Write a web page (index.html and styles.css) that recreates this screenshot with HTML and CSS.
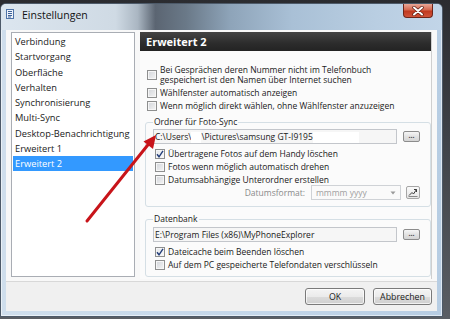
FILE: index.html
```html
<!DOCTYPE html>
<html lang="de">
<head>
    <meta charset="UTF-8">
    <title>Einstellungen</title>
    <link rel="stylesheet" href="styles.css">
</head>
<body>
    <div class="window">
        <div class="titlebar">
            <svg class="app-icon" width="8" height="10" viewBox="0 0 8 10">
                <rect x="0.5" y="0.5" width="7" height="9" fill="#eef3fa" stroke="#4f74a8"/>
                <path d="M2 2.5h4M2 4.5h4M2 6.5h4M2 8h3" stroke="#3d6299" stroke-width="1"/>
            </svg>
            <span class="title">Einstellungen</span>
            <div class="close-btn">
                <svg width="12" height="10" viewBox="0 0 12 10">
                    <path d="M2 1.5L10 8.5M10 1.5L2 8.5" stroke="#5a1a10" stroke-width="3.4" stroke-linecap="round"/>
                    <path d="M2 1.5L10 8.5M10 1.5L2 8.5" stroke="#ffffff" stroke-width="2" stroke-linecap="round"/>
                </svg>
            </div>
        </div>

        <div class="client">
            <div class="main">
                <ul class="nav">
                    <li>Verbindung</li>
                    <li>Startvorgang</li>
                    <li>Oberfläche</li>
                    <li>Verhalten</li>
                    <li>Synchronisierung</li>
                    <li>Multi-Sync</li>
                    <li>Desktop-Benachrichtigung</li>
                    <li>Erweitert 1</li>
                    <li class="selected">Erweitert 2</li>
                </ul>

                <div class="panel">
                    <div class="panel-header">Erweitert 2</div>
                    <div class="panel-body">
                        <div class="checks">
                            <label class="check-row"><span class="box"></span><span>Bei Gesprächen deren Nummer nicht im Telefonbuch<br>gespeichert ist den Namen über Internet suchen</span></label>
                            <label class="check-row"><span class="box"></span><span>Wählfenster automatisch anzeigen</span></label>
                            <label class="check-row"><span class="box"></span><span>Wenn möglich direkt wählen, ohne Wählfenster anzuzeigen</span></label>
                        </div>

                        <fieldset class="group">
                            <legend>Ordner für Foto-Sync</legend>
                            <div class="path-row">
                                <div class="path-field">C:\Users\<span class="blot small"></span>\Pictures\samsung GT-I9195<span class="blot wide"></span></div>
                                <div class="dots-btn">...</div>
                            </div>
                            <div class="checks inner">
                                <label class="check-row"><span class="box checked"><svg width="8" height="8" viewBox="0 0 8 8"><path d="M1 4.2L3 6.8L7 0.8" fill="none" stroke="#233d78" stroke-width="1.4"/></svg></span><span>Übertragene Fotos auf dem Handy löschen</span></label>
                                <label class="check-row"><span class="box"></span><span>Fotos wenn möglich automatisch drehen</span></label>
                                <label class="check-row"><span class="box"></span><span>Datumsabhängige Unterordner erstellen</span></label>
                            </div>
                            <div class="date-row">
                                <span class="date-label">Datumsformat:</span>
                                <div class="combo">
                                    <span>mmmm yyyy</span>
                                    <svg width="6" height="4" viewBox="0 0 6 4"><path d="M0.5 0.5L3 3.5L5.5 0.5z" fill="#9a9a9a"/></svg>
                                </div>
                                <div class="tool-btn">
                                    <svg width="10" height="9" viewBox="0 0 10 9">
                                        <path d="M1 7.5L4 4.5L5.5 6L8.5 1.5" fill="none" stroke="#3a3a3a" stroke-width="1"/>
                                        <path d="M6 1.5H8.5V4" fill="none" stroke="#3a3a3a" stroke-width="1"/>
                                        <path d="M0.5 8.5H9.5" stroke="#888" stroke-width="1"/>
                                    </svg>
                                </div>
                            </div>
                        </fieldset>

                        <fieldset class="group second">
                            <legend>Datenbank</legend>
                            <div class="path-row">
                                <div class="path-field">E:\Program Files (x86)\MyPhoneExplorer</div>
                                <div class="dots-btn">...</div>
                            </div>
                            <div class="checks inner">
                                <label class="check-row"><span class="box checked"><svg width="8" height="8" viewBox="0 0 8 8"><path d="M1 4.2L3 6.8L7 0.8" fill="none" stroke="#233d78" stroke-width="1.4"/></svg></span><span>Dateicache beim Beenden löschen</span></label>
                                <label class="check-row"><span class="box"></span><span>Auf dem PC gespeicherte Telefondaten verschlüsseln</span></label>
                            </div>
                        </fieldset>
                    </div>
                </div>
            </div>

            <div class="footer">
                <button class="btn">OK</button>
                <button class="btn">Abbrechen</button>
            </div>
        </div>
    </div>

    <!-- rote Markierung aus dem Screenshot -->
    <svg class="annotation" width="450" height="319" viewBox="0 0 450 319">
        <path d="M87 221L151 141" stroke="#c8141a" stroke-width="3" stroke-linecap="round"/>
        <path d="M156 135L143.5 141.5L153 149z" fill="#c8141a"/>
    </svg>
</body>
</html>
```

FILE: styles.css
```css
* {
    box-sizing: border-box;
}

body {
    margin: 0;
    padding-top: 3px;
    width: 450px;
    height: 319px;
    overflow: hidden;
    position: relative;
    background: linear-gradient(#2b2c30, #3d4046 40%, #5a5e64);
    font-family: "Open Sans", "Noto Sans", sans-serif;
    color: #1a1a1a;
}

.window {
    width: 443px;
    height: 314px;
    padding: 0 5px 5px;
    border: 1px solid #4d5a69;
    border-radius: 6px 6px 0 0;
    background: linear-gradient(90deg, #cfdeec, #c3d6e9 60%, #b7cde3);
    box-shadow: inset 0 0 0 1px rgba(255, 255, 255, 0.55);
}

.titlebar {
    height: 26px;
    margin: 0 -5px;
    padding: 0 5px;
    display: flex;
    align-items: flex-start;
    border-radius: 5px 5px 0 0;
    background: linear-gradient(90deg, #dce6ef 0%, #cfdae4 26%, #aab6c2 31%, #5b6572 35%, #6a7988 42%, #8ea4b9 52%, #a9c0d6 66%, #b9cee2 85%, #c2d5e8 100%);
}

.app-icon {
    margin-top: 5px;
}

.title {
    margin: 4px 0 0 8px;
    font-size: 10.5px;
    line-height: 14px;
    color: #111;
}

.close-btn {
    margin-left: auto;
    margin-right: 4px;
    width: 30px;
    height: 14px;
    display: flex;
    align-items: center;
    justify-content: center;
    border: 1px solid #6d2418;
    border-top: none;
    border-radius: 0 0 4px 4px;
    background: linear-gradient(#e9a898, #d5674f 45%, #c0391f 55%, #d0533a);
}

.client {
    height: 281px;
    display: flex;
    flex-direction: column;
    background: #f8f8f8;
}

.main {
    height: 251px;
    display: flex;
    padding: 2px 5px 0;
}

.nav {
    list-style: none;
    margin: 0;
    padding: 1px;
    width: 124px;
    height: 245px;
    border: 1px solid #a9adb4;
    background: #fff;
    font-size: 9.3px;
    line-height: 15.25px;
}

.nav li {
    padding: 0 2px;
    white-space: nowrap;
}

.nav li.selected {
    background: #3399ff;
    color: #fff;
}

.panel {
    width: 292px;
    height: 247px;
    margin-left: 5px;
    background: #fbfbfb;
    border-right: 1px solid #cfcfcf;
}

.panel-header {
    height: 19px;
    padding-left: 6px;
    background: linear-gradient(#444, #2c2c2c 60%, #232323);
    color: #fff;
    font-size: 11px;
    font-weight: bold;
    line-height: 19px;
}

.panel-body {
    padding: 14px 0 0 7px;
    font-size: 8.5px;
    line-height: 10px;
}

.checks {
    display: flex;
    flex-direction: column;
    gap: 3px;
}

.checks.inner {
    margin: 5px 0 0 2px;
}

.check-row {
    display: flex;
    align-items: center;
    gap: 3px;
    white-space: nowrap;
}

.box {
    flex: none;
    width: 10px;
    height: 10px;
    display: flex;
    align-items: center;
    justify-content: center;
    border: 1px solid #8e8f8f;
    background: linear-gradient(135deg, #d2d5da, #f4f4f4);
    box-shadow: inset 0 0 0 1px #f6f6f6;
}

.box.checked {
    background: linear-gradient(135deg, #e3e6ea, #fafafa);
}

.group {
    width: 286px;
    margin: 6px 0 0 -2px;
    padding: 2px 10px 6px 7px;
    border: 1px solid #d5dfe5;
    border-radius: 3px;
}

.group.second {
    margin-top: 7px;
    padding-top: 3px;
}

.group legend {
    padding: 0 1px;
    font-size: 8.5px;
    line-height: 10px;
}

.path-row {
    display: flex;
    align-items: center;
    gap: 6px;
}

.path-field {
    width: 244px;
    height: 15px;
    padding-left: 1px;
    border: 1px solid #c3c6cb;
    background: #f6f6f6;
    line-height: 13px;
    white-space: nowrap;
    overflow: hidden;
}

.blot {
    display: inline-block;
    height: 11px;
    vertical-align: middle;
    background: #fff;
}

.blot.small {
    width: 10px;
}

.blot.wide {
    width: 46px;
}

.dots-btn {
    width: 17px;
    height: 11px;
    border: 1px solid #8c8c8c;
    border-radius: 2px;
    background: linear-gradient(#f6f6f6, #e2e2e2 50%, #d4d4d4);
    font-size: 7px;
    font-weight: bold;
    line-height: 7px;
    text-align: center;
    color: #333;
}

.date-row {
    display: flex;
    align-items: center;
    justify-content: flex-end;
    height: 15px;
}

.date-label {
    color: #8a8a8a;
    margin-right: 6px;
}

.combo {
    width: 90px;
    height: 15px;
    display: flex;
    align-items: center;
    justify-content: space-between;
    padding: 0 4px 0 4px;
    border: 1px solid #cfd2d6;
    background: #fafafa;
    color: #a0a0a0;
    margin-right: 5px;
}

.tool-btn {
    width: 14px;
    height: 13px;
    display: flex;
    align-items: center;
    justify-content: center;
    border: 1px solid #a6a6a6;
    border-radius: 2px;
    background: linear-gradient(#fafafa, #e6e6e6);
}

.footer {
    height: 30px;
    display: flex;
    align-items: center;
    justify-content: flex-end;
    gap: 8px;
    padding-right: 5px;
    border-top: 1px solid #d8d8d8;
    background: #f0f0f0;
}

.btn {
    height: 17px;
    width: 60px;
    padding: 0;
    border: 1px solid #7a7a7a;
    border-radius: 3px;
    background: linear-gradient(#f4f4f4, #ebebeb 50%, #dcdcdc 51%, #cfcfcf);
    box-shadow: inset 0 0 0 1px rgba(255, 255, 255, 0.7);
    font-family: "Open Sans", "Noto Sans", sans-serif;
    font-size: 8.8px;
    color: #1a1a1a;
}

.btn + .btn {
    width: 59px;
}

.annotation {
    position: absolute;
    left: 0;
    top: 0;
    pointer-events: none;
}
```
